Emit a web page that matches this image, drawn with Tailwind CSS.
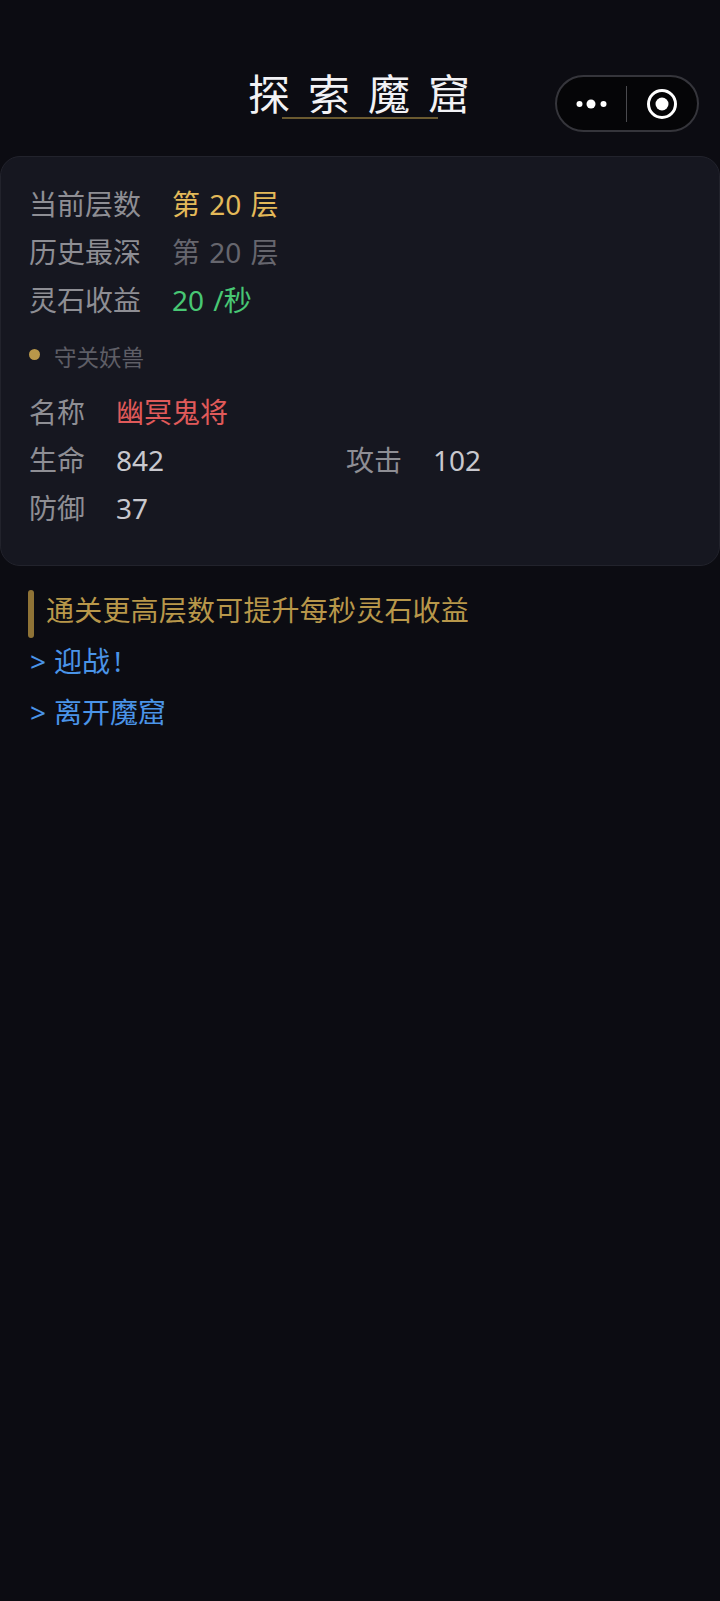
<!DOCTYPE html>
<html>
  <head>
    <meta charset="UTF-8" />
    <meta name="viewport" content="width=device-width, initial-scale=1.0" />
    <script src="https://cdn.jsdelivr.net/npm/@tailwindcss/browser@4"></script>
  </head>
  <body class="bg-[#0c0c12] min-h-[1601px] font-['Noto_Sans','Noto_Sans_CJK_SC',sans-serif] text-[28px] leading-[48px]">
    <!-- header -->
    <div class="h-[156px] relative flex justify-center pt-[68px]">
      <div class="relative h-[52px] pl-[16px]">
        <h1 class="text-[42px] leading-[52px] tracking-[18px] text-[#f2f2f5] font-normal">探索魔窟</h1>
        <div class="absolute left-[50px] top-[49px] w-[156px] h-[2px] bg-[#6b5a30]"></div>
      </div>
      <!-- capsule -->
      <div class="absolute left-[555px] top-[75px] w-[144px] h-[57px] rounded-full border-2 border-[#35353b] bg-[#050507] flex items-center">
        <div class="w-[69px] flex justify-center">
          <svg width="32" height="12" viewBox="0 0 32 12"><circle cx="3.5" cy="6" r="3" fill="#fff"/><circle cx="15" cy="6" r="4.5" fill="#fff"/><circle cx="27.5" cy="6" r="3" fill="#fff"/></svg>
        </div>
        <div class="w-[1px] h-[36px] bg-[#4a4a4e]"></div>
        <div class="flex-1 flex justify-center">
          <svg width="32" height="32" viewBox="0 0 32 32"><circle cx="16" cy="16" r="13.5" fill="none" stroke="#fff" stroke-width="3"/><circle cx="16" cy="16" r="6.5" fill="#fff"/></svg>
        </div>
      </div>
    </div>

    <!-- card -->
    <div class="h-[410px] bg-[#161720] border border-[#22232c] rounded-[20px] pt-[23px] pl-[28px]">
      <div class="flex"><span class="w-[143px] text-[#8e8e94]">当前层数</span><span class="text-[#e3b959] [word-spacing:2px]">第 20 层</span></div>
      <div class="flex"><span class="w-[143px] text-[#8e8e94]">历史最深</span><span class="text-[#66666e] [word-spacing:2px]">第 20 层</span></div>
      <div class="flex"><span class="w-[143px] text-[#8e8e94]">灵石收益</span><span class="text-[#48c774] [word-spacing:2px]">20 /秒</span></div>

      <div class="flex items-center mt-[10px] mb-[6px] h-[48px]">
        <span class="w-[11px] h-[11px] rounded-full bg-[#b8974a] mr-[14px] -mt-[8px]"></span>
        <span class="text-[22.5px] text-[#5e5e66]">守关妖兽</span>
      </div>

      <div class="flex"><span class="w-[87px] text-[#8e8e94]">名称</span><span class="text-[#e05a5a]">幽冥鬼将</span></div>
      <div class="flex">
        <div class="flex w-[317px]"><span class="w-[87px] text-[#8e8e94]">生命</span><span class="text-[#c8c8ce]">842</span></div>
        <div class="flex"><span class="w-[87px] text-[#8e8e94]">攻击</span><span class="text-[#c8c8ce]">102</span></div>
      </div>
      <div class="flex"><span class="w-[87px] text-[#8e8e94]">防御</span><span class="text-[#c8c8ce]">37</span></div>
    </div>

    <!-- notice and actions -->
    <div class="px-[28px] pt-[24px]">
      <div class="relative pl-[18px] h-[48px] leading-[40px] tracking-[0.2px] text-[#b8974a]">
        <span class="absolute left-0 top-0 w-[6px] h-[48px] rounded-[3px] bg-[#8f7336]"></span>
        通关更高层数可提升每秒灵石收益
      </div>
      <div class="flex pl-[2px] -mt-[1px] text-[#4a94e8]"><span class="w-[24px]">&gt;</span><span>迎战</span><span class="ml-[4px]">!</span></div>
      <div class="flex pl-[2px] mt-[3px] text-[#4a94e8]"><span class="w-[24px]">&gt;</span><span>离开魔窟</span></div>
    </div>
  </body>
</html>
